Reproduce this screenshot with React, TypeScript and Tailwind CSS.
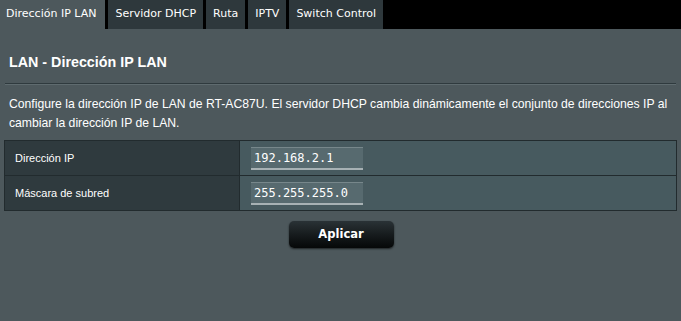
const tabs = ["Dirección IP LAN", "Servidor DHCP", "Ruta", "IPTV", "Switch Control"];

const rows = [
  { label: "Dirección IP", value: "192.168.2.1" },
  { label: "Máscara de subred", value: "255.255.255.0" },
];

export default function App() {
  return (
    <div className="h-[321px] w-[681px] overflow-hidden bg-[#4d585c] font-['Liberation_Sans',Arial,sans-serif] text-white">
      <div className="flex h-[29px] gap-[3px] bg-black">
        {tabs.map((tab, i) => (
          <div
            key={tab}
            className={
              i === 0
                ? "flex items-center bg-[#4d585c] pl-[6px] pr-[9px] font-['DejaVu_Sans',Verdana,sans-serif] text-[11px] text-white"
                : "flex items-center bg-[#2e383c] px-[7px] font-['DejaVu_Sans',Verdana,sans-serif] text-[11px] text-white"
            }
          >
            {tab}
          </div>
        ))}
      </div>

      <div className="px-[5px]">
        <h1 className="mt-[24px] pl-[4px] text-[14.3px] font-bold leading-[18px]">LAN - Dirección IP LAN</h1>
        <div className="mt-[12px] border-t border-[#2f3a3e]" />
        <div className="border-t border-[#5f6b6f]" />
        <p className="mt-[10px] pl-[4px] text-[12.2px] leading-[19px]">
          Configure la dirección IP de LAN de RT-AC87U. El servidor DHCP cambia dinámicamente el conjunto de direcciones IP al cambiar la dirección IP de LAN.
        </p>

        <table className="mt-[7px] w-[673px] -ml-[1px] border-collapse border border-[#222b2e]">
          <tbody>
            {rows.map((row) => (
              <tr key={row.label} className="h-[35px] border border-[#222b2e]">
                <td className="w-[235px] border border-[#222b2e] bg-[#2f3a3e] pl-[10px] text-[11px]">{row.label}</td>
                <td className="bg-[#475a5f] pl-[11px]">
                  <div className="flex h-[23px] w-[112px] items-center border-t border-[#77878b] border-b-2 border-b-[#a7b1b4] bg-[#576a6f] pl-[3px] font-['DejaVu_Sans_Mono',monospace] text-[12px]">
                    {row.value}
                  </div>
                </td>
              </tr>
            ))}
          </tbody>
        </table>

        <div className="mt-[10px] flex justify-center">
          <button className="ml-[1px] h-[27px] w-[105px] rounded-[5px] bg-gradient-to-b from-[#2a3236] to-[#060808] font-['DejaVu_Sans',Verdana,sans-serif] text-[11.5px] font-bold text-white shadow-[0_1px_2px_rgba(0,0,0,0.6)]">
            Aplicar
          </button>
        </div>
      </div>
    </div>
  );
}
